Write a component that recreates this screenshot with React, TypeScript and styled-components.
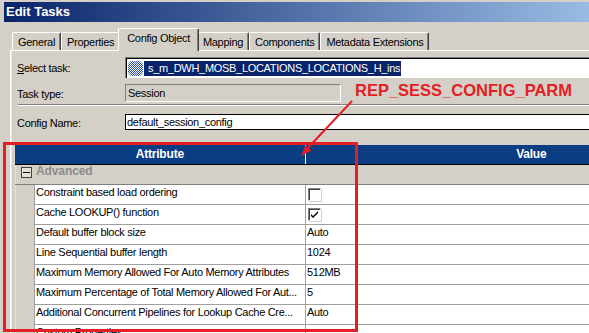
import styled, { createGlobalStyle } from "styled-components";

const GlobalStyle = createGlobalStyle`
  html, body {
    margin: 0;
    padding: 0;
    background: #d4d0c8;
  }
  body {
    font-family: "Liberation Sans", Arial, sans-serif;
    font-size: 11px;
    letter-spacing: -0.3px;
    color: #000;
  }
`;

type Attr = { name: string; value?: string; check?: "on" | "off" };

const attributes: Attr[] = [
  { name: "Constraint based load ordering", check: "off" },
  { name: "Cache LOOKUP() function", check: "on" },
  { name: "Default buffer block size", value: "Auto" },
  { name: "Line Sequential buffer length", value: "1024" },
  { name: "Maximum Memory Allowed For Auto Memory Attributes", value: "512MB" },
  { name: "Maximum Percentage of Total Memory Allowed For Aut...", value: "5" },
  { name: "Additional Concurrent Pipelines for Lookup Cache Cre...", value: "Auto" },
  { name: "Custom Properties", value: "" },
];

const tabs = [
  "General",
  "Properties",
  "Config Object",
  "Mapping",
  "Components",
  "Metadata Extensions",
];

const TaskIcon = () => (
  <svg width="16" height="15" viewBox="0 0 16 15">
    <defs>
      <pattern id="dither" width="2" height="2" patternUnits="userSpaceOnUse">
        <rect width="2" height="2" fill="#ffffff" />
        <rect width="1" height="1" fill="#2a4aa8" />
        <rect x="1" y="1" width="1" height="1" fill="#2a4aa8" />
      </pattern>
    </defs>
    <path d="M3 0h9l3 3v9l-3 3H3l-3-3V3z" fill="url(#dither)" />
  </svg>
);

const CheckMark = () => (
  <svg width="9" height="9" viewBox="0 0 9 9">
    <path d="M1 4l2 2 5-5v2l-5 5-2-2z" fill="#000" />
  </svg>
);

export default function App() {
  return (
    <>
      <GlobalStyle />
      <Window>
        <TitleBar>Edit Tasks</TitleBar>

        <TabStrip>
          {tabs.map((t) => (
            <Tab key={t} $active={t === "Config Object"}>
              {t}
            </Tab>
          ))}
        </TabStrip>

        <Panel>
          <FormRow $top={6} $height={21}>
            <Label>
              <u>S</u>elect task:
            </Label>
            <SelectField>
              <TaskIcon />
              <Highlight>s_m_DWH_MOSB_LOCATIONS_LOCATIONS_H_ins</Highlight>
            </SelectField>
          </FormRow>

          <FormRow $top={6} $height={18}>
            <Label>Task type:</Label>
            <ReadOnlyField>Session</ReadOnlyField>
          </FormRow>

          <Separator />

          <FormRow $top={8} $height={16}>
            <Label>Config Name:</Label>
            <TextField>default_session_config</TextField>
          </FormRow>

          <Grid>
            <HeaderRow>
              <HeaderCell $width={290}>Attribute</HeaderCell>
              <HeaderCell $width={452} $divider>
                Value
              </HeaderCell>
            </HeaderRow>

            <GroupRow>
              <Gutter>
                <Toggle>
                  <span />
                </Toggle>
              </Gutter>
              <GroupTitle>Advanced</GroupTitle>
            </GroupRow>

            {attributes.map((a) => (
              <DataRow key={a.name}>
                <Gutter />
                <AttrCell>{a.name}</AttrCell>
                <ValueCell>
                  {a.check ? (
                    <CheckBox>{a.check === "on" && <CheckMark />}</CheckBox>
                  ) : (
                    a.value
                  )}
                </ValueCell>
              </DataRow>
            ))}
          </Grid>
        </Panel>

        <RedFrame />
        <Callout>REP_SESS_CONFIG_PARM</Callout>
        <ArrowLayer width="589" height="333" viewBox="0 0 589 333">
          <line x1="352" y1="101" x2="306" y2="150" stroke="#e41e25" strokeWidth="2" />
          <polygon points="301,156 311.4,150.7 305.6,145.2" fill="#e41e25" />
        </ArrowLayer>
      </Window>
    </>
  );
}

const Window = styled.div`
  position: relative;
  width: 589px;
  height: 333px;
  overflow: hidden;
  background: #d4d0c8;
  padding-top: 2px;
  box-sizing: border-box;
`;

const TitleBar = styled.div`
  margin-left: 4px;
  width: 640px;
  height: 20px;
  padding-left: 2px;
  background: linear-gradient(90deg, #0a246a 0%, #a6caf0 100%);
  color: #fff;
  font-weight: bold;
  font-size: 13px;
  letter-spacing: 0;
  line-height: 20px;
`;

const TabStrip = styled.div`
  display: flex;
  align-items: flex-end;
  height: 28px;
  padding-left: 12px;
  position: relative;
  z-index: 1;
`;

const Tab = styled.div<{ $active?: boolean }>`
  box-sizing: border-box;
  height: ${(p) => (p.$active ? 23 : 18)}px;
  margin: 0 ${(p) => (p.$active ? -2 : 0)}px ${(p) => (p.$active ? -1 : 0)}px;
  padding: ${(p) => (p.$active ? "0 8px" : "0 5px")};
  line-height: ${(p) => (p.$active ? 19 : 18)}px;
  white-space: nowrap;
  background: #d4d0c8;
  border-top: 1px solid #fff;
  border-left: 1px solid #fff;
  border-right: 1px solid #404040;
  box-shadow: inset -1px 0 0 #808080;
  border-radius: 2px 2px 0 0;
  position: relative;
  z-index: ${(p) => (p.$active ? 2 : 1)};
`;

const Panel = styled.div`
  margin-left: 10px;
  padding-left: 4px;
  height: 290px;
  border-top: 1px solid #fff;
  border-left: 1px solid #fff;
  box-shadow: inset 1px 0 0 #e8e6e0;
`;

const FormRow = styled.div<{ $top: number; $height: number }>`
  display: flex;
  align-items: center;
  margin-top: ${(p) => p.$top}px;
  height: ${(p) => p.$height}px;
  padding-left: 2px;
`;

const Label = styled.div`
  width: 108px;
  flex-shrink: 0;
  line-height: 14px;
  padding-top: 1px;
`;

const SelectField = styled.div`
  flex: 1;
  box-sizing: border-box;
  height: 21px;
  display: flex;
  align-items: center;
  padding-left: 1px;
  background: #fff;
  border-top: 1px solid #808080;
  border-left: 1px solid #808080;
  box-shadow: inset 1px 1px 0 #000;
  svg {
    margin-left: 1px;
    flex-shrink: 0;
  }
`;

const Highlight = styled.span`
  background: #0a246a;
  color: #fff;
  line-height: 15px;
  padding: 0 1px 0 4px;
  white-space: nowrap;
`;

const ReadOnlyField = styled.div`
  width: 216px;
  box-sizing: border-box;
  height: 18px;
  line-height: 16px;
  padding-left: 2px;
  border-top: 1px solid #808080;
  border-left: 1px solid #808080;
  border-bottom: 1px solid #fff;
  border-right: 1px solid #fff;
`;

const Separator = styled.div`
  margin: 2px 0 0 3px;
  border-top: 1px solid #808080;
  border-bottom: 1px solid #fff;
`;

const TextField = styled.div`
  flex: 1;
  box-sizing: border-box;
  height: 16px;
  line-height: 14px;
  padding-left: 1px;
  background: #fff;
  border: 1px solid #000;
  border-right: none;
`;

const Grid = styled.div`
  margin-top: 15px;
  width: 742px;
`;

const HeaderRow = styled.div`
  display: flex;
  height: 20px;
  box-sizing: border-box;
  background: #0b3d83;
  border-bottom: 1px solid #000;
  color: #fff;
  font-weight: bold;
  font-size: 12px;
  letter-spacing: -0.2px;
`;

const HeaderCell = styled.div<{ $width: number; $divider?: boolean }>`
  width: ${(p) => p.$width}px;
  text-align: center;
  line-height: 19px;
  border-left: ${(p) => (p.$divider ? "1px solid #fff" : "none")};
`;

const GroupRow = styled.div`
  display: flex;
  height: 20px;
  box-sizing: border-box;
  border-bottom: 1px solid #808080;
  background: #d4d0c8;
`;

const Gutter = styled.div`
  width: 19px;
  flex-shrink: 0;
  background: #d4d0c8;
  box-shadow: inset 1px 0 0 #e4e2dc;
`;

const Toggle = styled.div`
  margin: 2px 0 0 6px;
  width: 11px;
  height: 11px;
  box-sizing: border-box;
  border: 1px solid #404040;
  background: #e4e2dc;
  display: flex;
  align-items: center;
  justify-content: center;
  span {
    width: 7px;
    height: 1px;
    background: #000;
  }
`;

const GroupTitle = styled.div`
  padding-left: 2px;
  font-weight: bold;
  font-size: 12px;
  letter-spacing: -0.1px;
  line-height: 13px;
  color: #8c8c8c;
`;

const DataRow = styled.div`
  display: flex;
  height: 20px;
`;

const AttrCell = styled.div`
  width: 272px;
  box-sizing: border-box;
  padding-left: 1px;
  background: #fff;
  border-left: 1px solid #a0a0a0;
  border-right: 1px solid #a0a0a0;
  border-bottom: 1px solid #a0a0a0;
  line-height: 15px;
  white-space: nowrap;
  overflow: hidden;
`;

const ValueCell = styled.div`
  width: 451px;
  box-sizing: border-box;
  padding-left: 1px;
  background: #fff;
  border-bottom: 1px solid #a0a0a0;
  line-height: 15px;
  white-space: nowrap;
`;

const CheckBox = styled.div`
  margin: 3px 0 0 1px;
  width: 13px;
  height: 13px;
  box-sizing: border-box;
  background: #fff;
  border-top: 1px solid #808080;
  border-left: 1px solid #808080;
  border-bottom: 1px solid #fff;
  border-right: 1px solid #fff;
  box-shadow: inset 1px 1px 0 #404040, 1px 1px 0 #d4d0c8;
  display: flex;
  align-items: center;
  justify-content: center;
`;

const RedFrame = styled.div`
  position: absolute;
  left: 3px;
  top: 142px;
  width: 355px;
  height: 190px;
  box-sizing: border-box;
  border: 3px solid #e41e25;
  pointer-events: none;
`;

const Callout = styled.div`
  position: absolute;
  left: 355px;
  top: 80px;
  font-size: 16.5px;
  font-weight: bold;
  letter-spacing: 0;
  line-height: 20px;
  color: #e41e25;
  white-space: nowrap;
`;

const ArrowLayer = styled.svg`
  position: absolute;
  left: 0;
  top: 0;
  pointer-events: none;
`;
